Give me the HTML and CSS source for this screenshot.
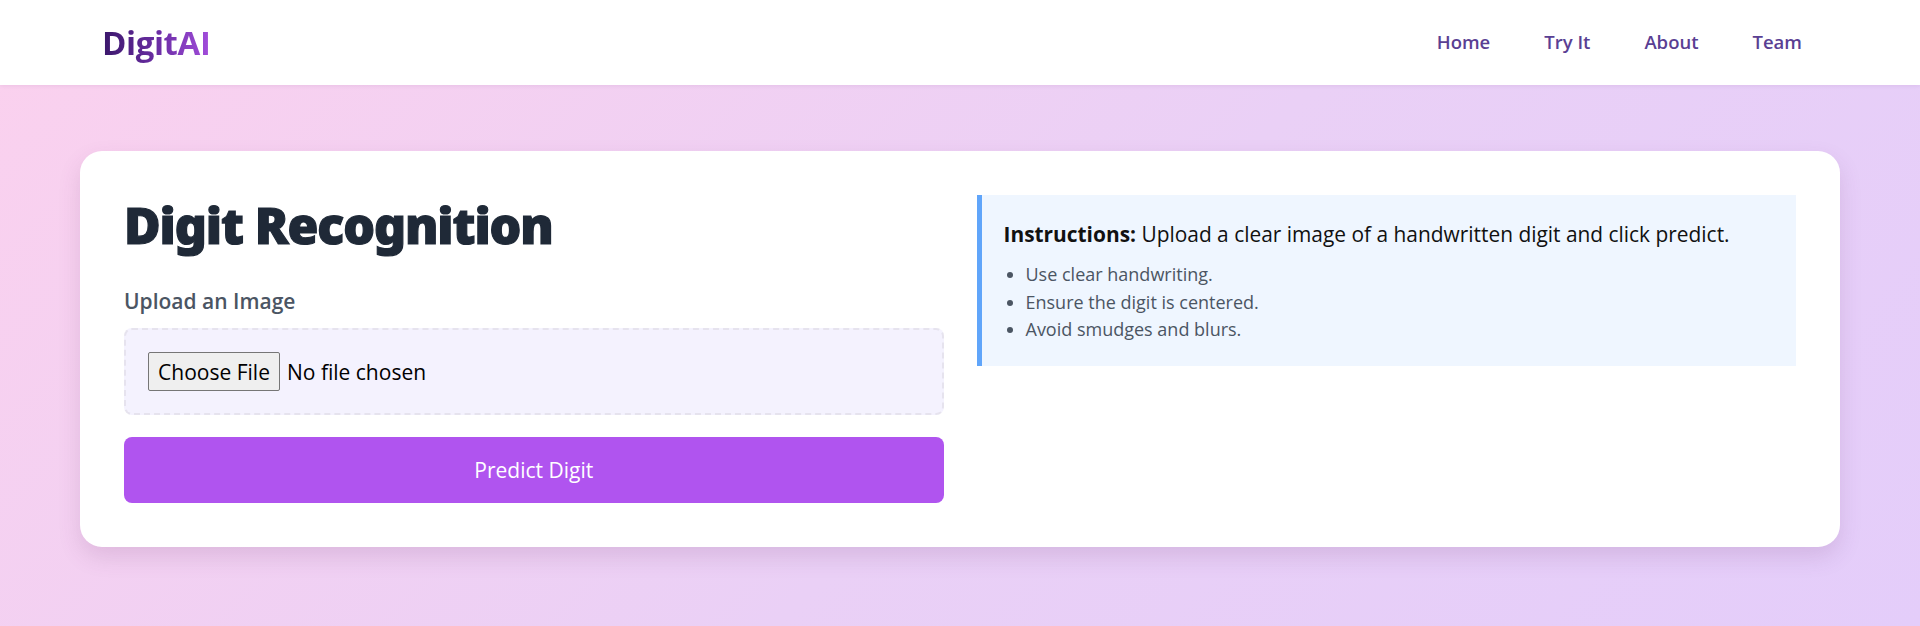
FILE: index.html
```html
<!DOCTYPE html>
<html lang="en">
<head>
<meta charset="utf-8">
<title>DigitAI</title>
<link rel="stylesheet" href="styles.css">
</head>
<body>
<header class="topbar">
  <a class="logo" href="#">DigitAI</a>
  <nav class="nav">
    <a href="#">Home</a>
    <a href="#">Try It</a>
    <a href="#">About</a>
    <a href="#">Team</a>
  </nav>
</header>
<main class="page">
  <section class="card">
    <div class="col-left">
      <h1 class="title">Digit Recognition</h1>
      <label class="upload-label" for="file">Upload an Image</label>
      <div class="dropzone">
        <input class="file-input" id="file" type="file">
      </div>
      <button class="predict" type="button">Predict Digit</button>
    </div>
    <div class="col-right">
      <div class="instructions">
        <p class="lead"><strong>Instructions:</strong> Upload a clear image of a handwritten digit and click predict.</p>
        <ul class="tips">
          <li>Use clear handwriting.</li>
          <li>Ensure the digit is centered.</li>
          <li>Avoid smudges and blurs.</li>
        </ul>
      </div>
    </div>
  </section>
</main>
</body>
</html>
```
FILE: styles.css
```css
* { box-sizing: border-box; }
html, body { margin: 0; height: 100%; }
body {
  font-family: "Open Sans", "Noto Sans", sans-serif;
  background: linear-gradient(135deg, #fbd1ee 0%, #ead0f6 55%, #e4cdfa 100%);
  min-height: 626px;
}
.topbar {
  height: 85px;
  background: #fff;
  display: flex;
  align-items: center;
  justify-content: space-between;
  padding: 0 104px 0 102px;
  box-shadow: 0 1px 4px rgba(120, 60, 140, 0.10);
  position: relative;
}
.logo {
  font-size: 33px;
  font-weight: 700;
  text-decoration: none;
  background: linear-gradient(90deg, #3a176a 0%, #6e2fa8 55%, #a24ddb 100%);
  -webkit-background-clip: text;
  background-clip: text;
  color: transparent;
  letter-spacing: -0.4px;
}
.nav {
  display: flex;
  gap: 54px;
  margin-right: 14px;
  margin-bottom: 3px;
}
.nav a {
  color: #5a3f93;
  font-size: 18.5px;
  font-weight: 600;
  text-decoration: none;
}
.page {
  padding: 66px 80px 40px;
}
.card {
  background: #fff;
  border-radius: 22px;
  padding: 44px;
  display: grid;
  grid-template-columns: 1fr 1fr;
  column-gap: 33px;
  align-items: start;
  box-shadow: 0 10px 22px rgba(120, 60, 120, 0.16);
}
.col-left { display: flex; flex-direction: column; }
.title {
  margin: 0;
  font-family: "Noto Sans", "Open Sans", sans-serif;
  font-weight: 900;
  font-size: 50px;
  line-height: 60px;
  color: #1f2937;
  letter-spacing: -1.1px;
  -webkit-text-stroke: 1.2px #1f2937;
}
.upload-label {
  margin-top: 32px;
  font-size: 21px;
  font-weight: 600;
  line-height: 28px;
  color: #4b5563;
}
.dropzone {
  margin-top: 13px;
  height: 87px;
  border: 2px dashed #e6e3ee;
  border-radius: 8px;
  background: #f4f2fe;
  padding: 21px 22px;
  display: flex;
  align-items: center;
}
.file-input {
  font-family: "Open Sans", "Noto Sans", sans-serif;
  font-size: 21px;
  color: #000;
}
.file-input::file-selector-button {
  font: inherit;
  height: 39px;
  width: 132px;
  padding: 0;
  margin-right: 7px;
  border: 1px solid #767676;
  border-radius: 2px;
  background: #efefef;
  color: #000;
}
.predict {
  margin-top: 22px;
  height: 66px;
  border: 0;
  border-radius: 8px;
  background: #b054ef;
  color: #fff;
  font-family: "Open Sans", "Noto Sans", sans-serif;
  font-size: 21px;
}
.instructions {
  background: #eff6ff;
  border-left: 5px solid #60a5fa;
  padding: 24px 22px 22px;
}
.lead {
  margin: 0;
  font-size: 20.9px;
  line-height: 30px;
  color: #111;
}
.lead strong { font-weight: 700; }
.tips {
  margin: 12px 0 0;
  padding-left: 22px;
  color: #4b5563;
  font-size: 18px;
  line-height: 27.5px;
}
.tips li::marker { color: #4b5563; }
```
